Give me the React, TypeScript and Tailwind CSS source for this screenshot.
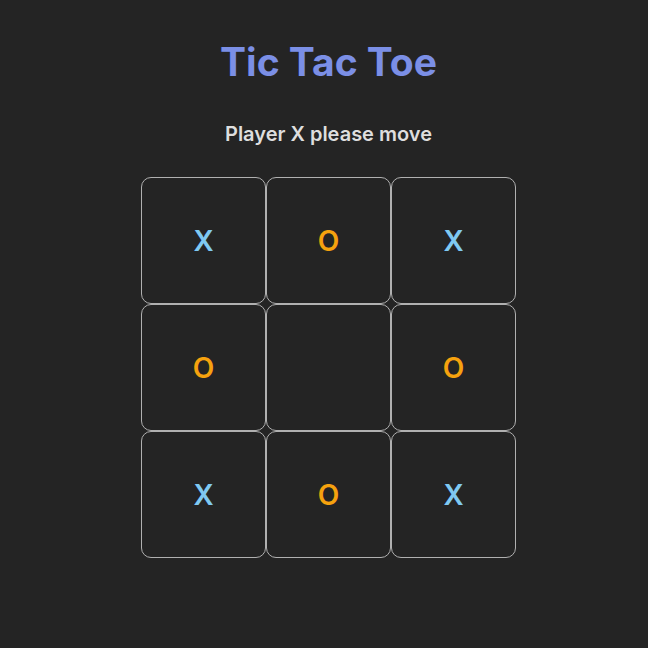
export default function App() {
  const board = ["X", "O", "X", "O", "", "O", "X", "O", "X"];
  return (
    <div className="min-h-[648px] w-full bg-[#242424] flex flex-col items-center pl-[9px]" style={{ fontFamily: "Inter, 'Noto Sans', sans-serif" }}>
      <h1 className="mt-[40px] text-[39px] leading-[44px] font-bold text-[#7b8fe6]">Tic Tac Toe</h1>
      <div className="mt-[36px] text-[20px] leading-[28px] font-semibold text-[#dedede]">Player X please move</div>
      <div className="mt-[29px] grid grid-cols-[repeat(3,125px)] grid-rows-[repeat(3,127px)]">
        {board.map((v, i) => (
          <div
            key={i}
            className="border border-[#b0b0b0] rounded-[10px] flex items-center justify-center"
          >
            <span className={"text-[28px] font-semibold " + (v === "X" ? "text-[#7fc9f2]" : "text-[#f6a20e]")}>{v}</span>
          </div>
        ))}
      </div>
    </div>
  );
}
